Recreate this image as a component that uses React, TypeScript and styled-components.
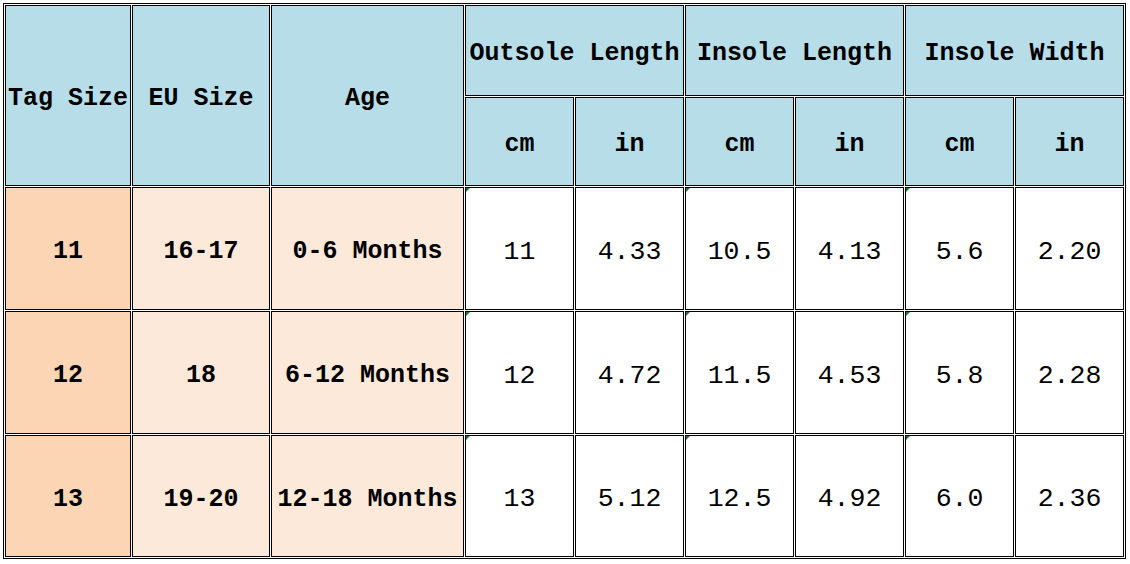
import styled, { createGlobalStyle, css } from "styled-components";

const GlobalStyle = createGlobalStyle`
  html, body {
    margin: 0;
    padding: 0;
    background: #ffffff;
  }
  body {
    font-family: "Liberation Mono", "DejaVu Sans Mono", monospace;
    color: #000000;
  }
`;

const Page = styled.div`
  padding: 3px;
`;

const Sheet = styled.div`
  display: grid;
  grid-template-columns: 126px 138px 193px repeat(6, 109px);
  grid-template-rows: 91px 89px 123px 123px 122px;
  gap: 1px;
  padding: 1px;
  border: 1px solid #000;
  background: #ffffff;
  width: max-content;
`;

type Tone = "head" | "tag" | "eu" | "plain";

const tones: Record<Tone, string> = {
  head: "#b7dee8",
  tag: "#fcd5b4",
  eu: "#fde9d9",
  plain: "#ffffff",
};

const Cell = styled.div<{
  $tone: Tone;
  $rows?: number;
  $cols?: number;
  $bold?: boolean;
  $flag?: boolean;
}>`
  position: relative;
  box-sizing: border-box;
  border: 1px solid #000;
  background: ${(p) => tones[p.$tone]};
  display: flex;
  align-items: center;
  justify-content: center;
  white-space: nowrap;
  overflow: hidden;
  grid-row: span ${(p) => p.$rows ?? 1};
  grid-column: span ${(p) => p.$cols ?? 1};
  ${(p) =>
    p.$bold
      ? css`
          font-weight: 700;
          font-size: 25px;
          padding-top: 6px;
        `
      : css`
          font-weight: 400;
          font-size: 26.5px;
          padding-top: 6px;
        `}
  ${(p) =>
    p.$flag &&
    css`
      &::before {
        content: "";
        position: absolute;
        left: 0;
        top: 0;
        border-top: 4px solid #1e7b34;
        border-right: 4px solid transparent;
      }
    `}
`;

const rows = [
  { tag: "11", eu: "16-17", age: "0-6 Months", vals: ["11", "4.33", "10.5", "4.13", "5.6", "2.20"] },
  { tag: "12", eu: "18", age: "6-12 Months", vals: ["12", "4.72", "11.5", "4.53", "5.8", "2.28"] },
  { tag: "13", eu: "19-20", age: "12-18 Months", vals: ["13", "5.12", "12.5", "4.92", "6.0", "2.36"] },
];

const groups = ["Outsole Length", "Insole Length", "Insole Width"];

export default function App() {
  return (
    <Page>
      <GlobalStyle />
      <Sheet>
        <Cell $tone="head" $rows={2} $bold>Tag Size</Cell>
        <Cell $tone="head" $rows={2} $bold>EU Size</Cell>
        <Cell $tone="head" $rows={2} $bold>Age</Cell>
        {groups.map((g) => (
          <Cell key={g} $tone="head" $cols={2} $bold>
            {g}
          </Cell>
        ))}
        {groups.map((g) => [
          <Cell key={g + "cm"} $tone="head" $bold>cm</Cell>,
          <Cell key={g + "in"} $tone="head" $bold>in</Cell>,
        ])}
        {rows.map((r) => [
          <Cell key={r.tag + "t"} $tone="tag" $bold>{r.tag}</Cell>,
          <Cell key={r.tag + "e"} $tone="eu" $bold>{r.eu}</Cell>,
          <Cell key={r.tag + "a"} $tone="eu" $bold>{r.age}</Cell>,
          ...r.vals.map((v, i) => (
            <Cell key={r.tag + "v" + i} $tone="plain" $flag={i % 2 === 0}>
              {v}
            </Cell>
          )),
        ])}
      </Sheet>
    </Page>
  );
}
